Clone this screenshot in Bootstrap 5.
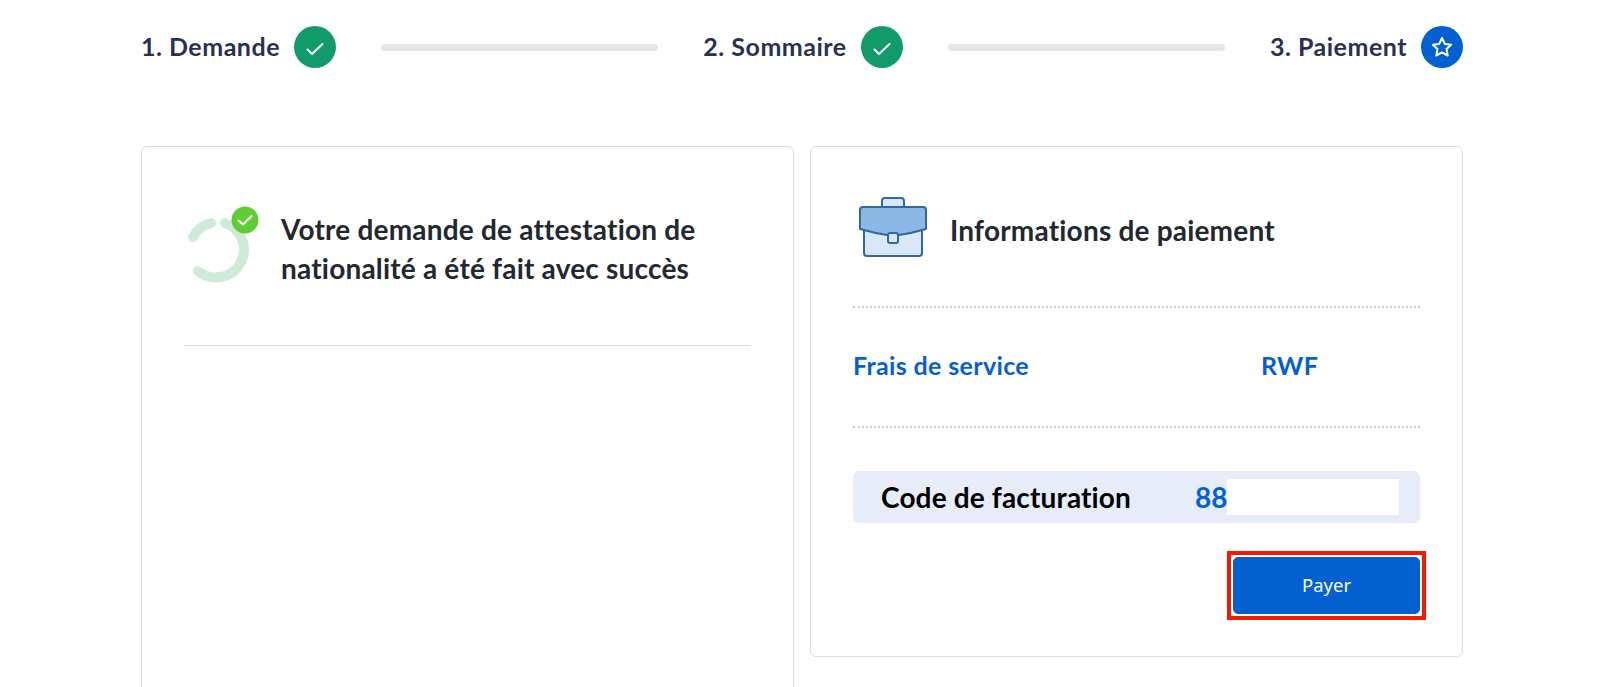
<!DOCTYPE html>
<html lang="fr">
<head>
  <meta charset="UTF-8">
  <meta name="viewport" content="width=device-width, initial-scale=1.0">
  <title>Paiement</title>
  <link href="https://cdn.jsdelivr.net/npm/bootstrap@5.3.3/dist/css/bootstrap.min.css" rel="stylesheet">
  <style>
    html, body { height: 687px; overflow: hidden; }
    body { background: #fff; font-family: Lato, "Noto Sans", sans-serif; }
    .page-wrap { width: 1322px; height: 687px; overflow: hidden; margin-left: 141px; padding-top: 26px; }
    .step-label { font-size: 25px; letter-spacing: .5px; font-weight: 700; color: #2a2f55; white-space: nowrap; line-height: 42px; margin-top: -2px; }
    .step-item { gap: 14px; }
    .step-dot { width: 42px; height: 42px; border-radius: 50%; flex: none; }
    .dot-done { background: #129b6a; }
    .dot-active { background: #0360d0; }
    .dot-done svg { margin-top: 3px; }
    .step-line { height: 7px; width: 277px; background: #e6e6e6; border-radius: 4px; flex: none; }
    .steps-row { height: 42px; margin-bottom: 78px; }
    .panes { display: grid; grid-template-columns: 653px 653px; column-gap: 16px; }
    .pane { border: 1px solid #d3deea; border-radius: 6px; height: 511px; }
    .pane-left { height: 600px; padding: 42px 42px 0 42px; }
    .pane-right { padding: 42px 42px 0 42px; }
    .pane-title { font-size: 28px; letter-spacing: .2px; line-height: 39px; font-weight: 700; color: #22282f; white-space: nowrap; }
    .left-head { height: 157px; border-bottom: 1px solid #d3deea; gap: 20px; padding-top: 16px; padding-left: 1px; }
    .left-head .pane-title { margin-top: 5px; }
    .right-head { height: 119px; gap: 23px; border-bottom: 2px dotted #c5cce0; align-items: center; padding-bottom: 34px; padding-left: 6px; }
    .right-head svg { margin-top: -8px; }
    .fee-row { height: 120px; border-bottom: 2px dotted #c5cce0; color: #0360d0; font-size: 25px; letter-spacing: .35px; font-weight: 700; align-items: center; padding-bottom: 2px; }
    .fee-name { width: 408px; }
    .code-box { margin-top: 43px; height: 52px; background: #e6ecf8; border-radius: 6px; padding-left: 28px; align-items: center; }
    .code-name { width: 314px; font-size: 28px; letter-spacing: .15px; font-weight: 700; color: #000; white-space: nowrap; }
    .code-val { font-size: 28px; font-weight: 700; color: #0360d0; }
    .code-hide { width: 172px; height: 36px; background: #fff; }
    .btn-row { margin-top: 28px; }
    .btn-mark { border: 4px solid #f71800; padding: 2px; margin-right: -6px; }
    .btn-pay { width: 187px; height: 57px; padding-top: 4px; background: #0360d0; border-color: #0360d0; color: #fff; font-size: 18.5px; border-radius: 5px; font-family: "Noto Sans", sans-serif; }
  </style>
</head>
<body>
<div class="page-wrap">
  <div class="d-flex align-items-center justify-content-between steps-row">
    <div class="d-flex align-items-center step-item">
      <span class="step-label">1. Demande</span>
      <span class="step-dot dot-done d-flex align-items-center justify-content-center">
        <svg width="18" height="14" viewBox="0 0 18 14"><path d="M1.500 7.500l4.500 4.500L16.500 2" fill="none" stroke="#fff" stroke-width="2" stroke-linecap="round" stroke-linejoin="round"/></svg>
      </span>
    </div>
    <div class="step-line"></div>
    <div class="d-flex align-items-center step-item">
      <span class="step-label">2. Sommaire</span>
      <span class="step-dot dot-done d-flex align-items-center justify-content-center">
        <svg width="18" height="14" viewBox="0 0 18 14"><path d="M1.500 7.500l4.500 4.500L16.500 2" fill="none" stroke="#fff" stroke-width="2" stroke-linecap="round" stroke-linejoin="round"/></svg>
      </span>
    </div>
    <div class="step-line"></div>
    <div class="d-flex align-items-center step-item">
      <span class="step-label">3. Paiement</span>
      <span class="step-dot dot-active d-flex align-items-center justify-content-center">
        <svg width="22" height="22" viewBox="0 0 22 22"><path d="M11 2l2.800 5.900 6.400.8-4.700 4.400 1.200 6.400L11 16.400l-5.700 3.100 1.200-6.400-4.700-4.400 6.400-.8z" fill="none" stroke="#fff" stroke-width="2" stroke-linejoin="round"/></svg>
      </span>
    </div>
  </div>

  <div class="panes">
    <div class="pane pane-left">
      <div class="d-flex left-head">
        <svg width="76" height="84" viewBox="0 0 76 84" class="flex-shrink-0">
          <path d="M8 32A28 28 0 0 1 26 18" fill="none" stroke="#cdebd6" stroke-width="10" stroke-linecap="round"/>
          <path d="M40 18A28 28 0 1 1 13 66" fill="none" stroke="#cdebd6" stroke-width="10" stroke-linecap="round"/>
          <circle cx="60" cy="15" r="13.500" fill="#5fce35"/>
          <path d="M53.500 15.500l4.500 4 8.500-8.500" fill="none" stroke="#fff" stroke-width="2" stroke-linecap="round" stroke-linejoin="round"/>
        </svg>
        <div class="pane-title">Votre demande de attestation de<br>nationalité a été fait avec succès</div>
      </div>
    </div>

    <div class="pane pane-right">
      <div class="d-flex right-head">
        <svg width="68" height="60" viewBox="0 0 68 60" class="flex-shrink-0">
          <rect x="23" y="1" width="22" height="14" rx="3" fill="#d8e8f8" stroke="#31689f" stroke-width="2"/>
          <rect x="5" y="18" width="58" height="41" rx="3" fill="#d8e8f8" stroke="#31689f" stroke-width="2"/>
          <path d="M1 13a3 3 0 0 1 3-3h60a3 3 0 0 1 3 3v19q-16 5-33 7Q18 37 1 32z" fill="#8bb8e5" stroke="#31689f" stroke-width="2" stroke-linejoin="round"/>
          <rect x="29" y="36" width="10" height="10" rx="2" fill="#d8e8f8" stroke="#31689f" stroke-width="2"/>
        </svg>
        <div class="pane-title">Informations de paiement</div>
      </div>
      <div class="d-flex fee-row">
        <span class="fee-name">Frais de service</span>
        <span>RWF</span>
      </div>
      <div class="d-flex code-box">
        <span class="code-name">Code de facturation</span>
        <span class="code-val">88</span>
        <span class="code-hide"></span>
      </div>
      <div class="d-flex justify-content-end btn-row">
        <div class="btn-mark"><button class="btn btn-pay" type="button">Payer</button></div>
      </div>
    </div>
  </div>
</div>
</body>
</html>
